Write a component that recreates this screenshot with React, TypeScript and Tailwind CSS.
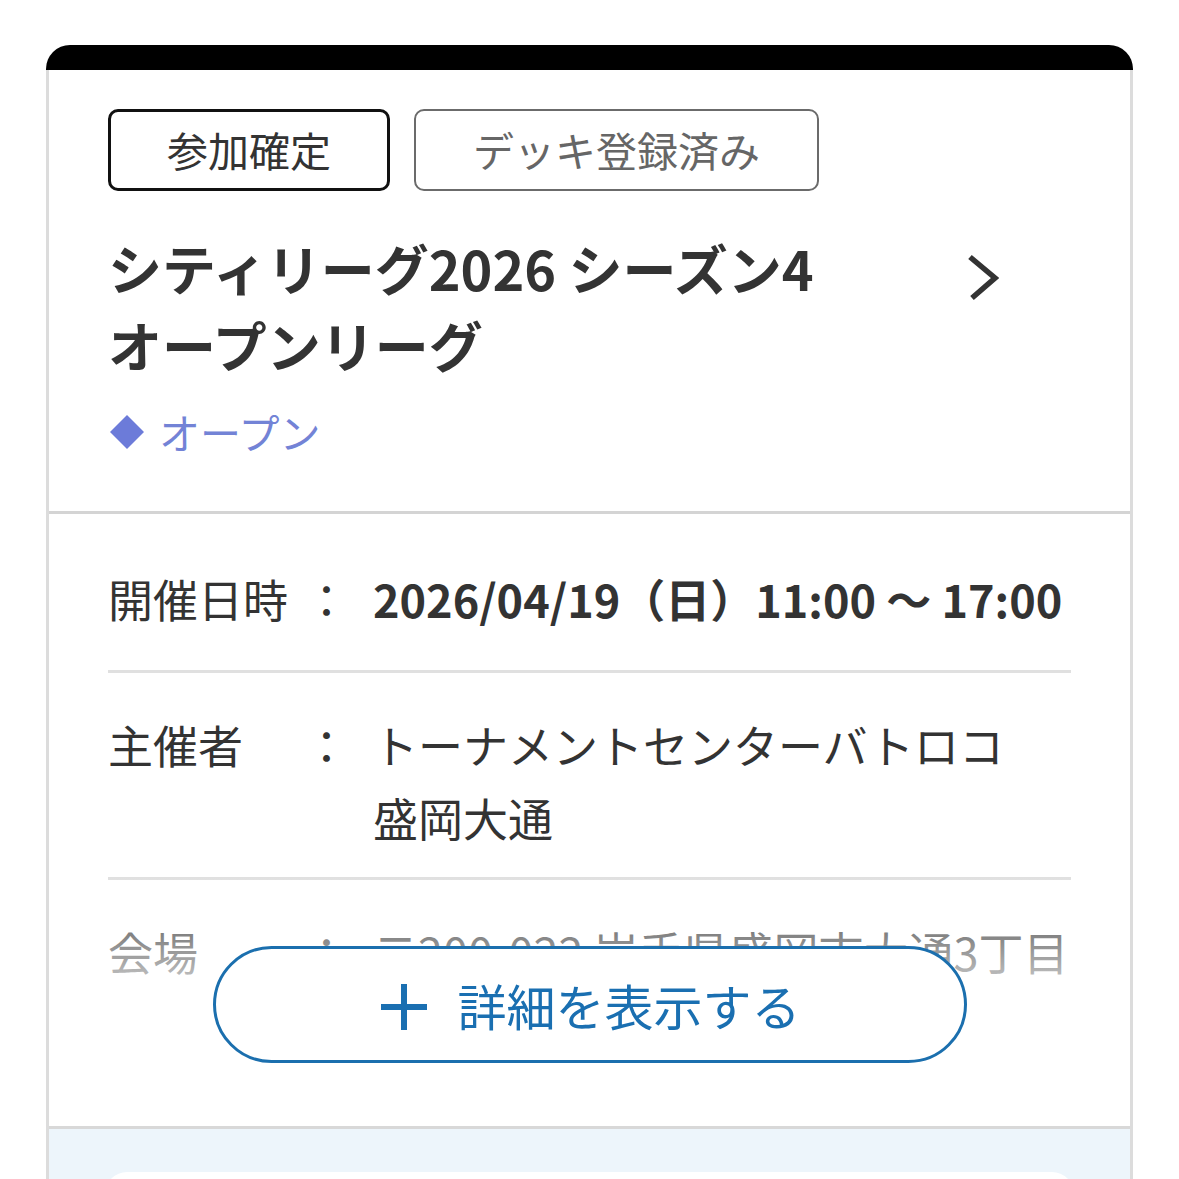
import type { ReactNode } from 'react';

const font = { fontFamily: '"Noto Sans CJK JP", "Noto Sans", sans-serif' };

function Row({ label, children, first, last, nowrap }: { label: string; children: ReactNode; first?: boolean; last?: boolean; nowrap?: boolean }) {
  return (
    <div
      className={`flex ${last ? '' : 'border-b-[3px] border-[#e0e0e0]'} ${first ? 'pt-[48px] pb-[35px]' : 'pt-[35px] pb-[23px]'}`}
    >
      <span className="w-[196px] shrink-0">{label}</span>
      <span className="w-[45px] shrink-0 text-center">：</span>
      <div className={`ml-[24px] flex-1 ${nowrap ? 'whitespace-nowrap' : ''}`}>{children}</div>
    </div>
  );
}

export default function App() {
  return (
    <div className="min-h-screen bg-white px-[46px] pt-[45px] text-[#333]" style={font}>
      <div className="overflow-hidden rounded-t-[24px]">
        <div className="h-[25px] bg-black" />
        <div className="border-x-[3px] border-[#dcdcdc]">
          {/* header */}
          <div className="border-b-[3px] border-[#d4d4d4] px-[59px] pt-[39px] pb-[48px]">
            <div className="flex gap-[24px]">
              <span className="flex h-[82px] items-center rounded-[10px] border-[3px] border-[#111] px-[56px] text-[41px] text-[#333]">
                参加確定
              </span>
              <span className="flex h-[82px] items-center rounded-[10px] border-[2px] border-[#6b6b6b] px-[57px] text-[41px] text-[#666]">
                デッキ登録済み
              </span>
            </div>
            <div className="mt-[38px] flex items-start">
              <h1 className="flex-1 pr-[40px] text-[54px] leading-[77px] font-bold text-[#333]">
                シティリーグ2026 シーズン4 <span className="inline-block">オープンリーグ</span>
              </h1>
              <svg width="34" height="50" viewBox="0 0 34 50" className="mt-[24px] mr-[72px] shrink-0">
                <polyline points="5,4 30,25 7,45" fill="none" stroke="#333" strokeWidth="5.5" />
              </svg>
            </div>
            <div className="mt-[17px] flex items-center text-[41px] leading-[63px] text-[#7383d6]">
              <span className="ml-[7px] h-[24px] w-[24px] rotate-45 bg-[#6c7bd9]" />
              <span className="ml-[20px]">オープン</span>
            </div>
          </div>

          {/* details (collapsed) */}
          <div className="relative h-[615px] overflow-hidden border-b-[3px] border-[#d8d8d8] text-[45px] leading-[73px]">
            <div className="px-[59px]">
              <Row label="開催日時" first>
                <span className="font-bold">2026/04/19（日）11:00 ～ 17:00</span>
              </Row>
              <Row label="主催者">
                トーナメントセンターバトロコ <span className="inline-block">盛岡大通</span>
              </Row>
              <Row label="会場" last nowrap>
                〒200-022 岩手県盛岡市大通3丁目
              </Row>
            </div>
            <div className="absolute inset-x-0 bottom-0 h-[250px] bg-gradient-to-b from-white/0 via-white via-60% to-white" />
            <button className="absolute bottom-[63px] left-1/2 flex h-[117px] w-[754px] -translate-x-1/2 items-center justify-center gap-[27px] rounded-full border-[3px] border-[#1b6fae] bg-white text-[49px] text-[#1a6fb1]">
              <svg width="52" height="52" viewBox="0 0 52 52" className="mt-[4px]">
                <path d="M26 3v46M3 26h46" stroke="#1a6fb1" strokeWidth="6" />
              </svg>
              <span className="leading-none">詳細を表示する</span>
            </button>
          </div>

          {/* next block */}
          <div className="bg-[#edf5fb] pt-[43px]">
            <div className="mx-[56px] h-[60px] rounded-t-[22px] bg-white" />
          </div>
        </div>
      </div>
    </div>
  );
}
